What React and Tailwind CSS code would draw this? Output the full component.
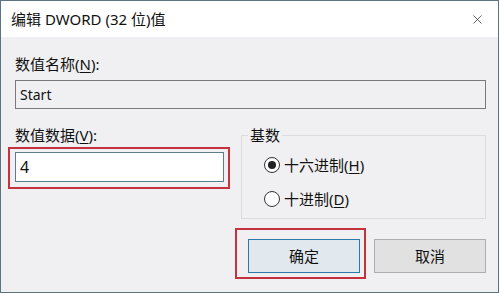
import { X } from "lucide-react";

const font = {
  fontFamily: '"Noto Sans", "Noto Sans CJK SC", sans-serif',
};

const Radio = ({ checked, children }) => (
  <label className="flex h-[20px] items-center gap-[4px]">
    <span className="flex h-[16px] w-[16px] items-center justify-center rounded-full border border-[#333] bg-white">
      {checked && <span className="h-[8px] w-[8px] rounded-full bg-[#222]" />}
    </span>
    <span className="text-[15px] leading-[20px]">{children}</span>
  </label>
);

const App = () => {
  return (
    <div
      className="flex h-[293px] w-[499px] flex-col border border-[#5a7482] bg-[#f0f0f2] text-[#111]"
      style={font}
    >
      <div className="flex h-[36px] flex-none items-center justify-between bg-white pl-[10px] pr-[13px]">
        <span className="text-[15px] leading-[20px]">编辑 DWORD (32 位)值</span>
        <X className="h-[15px] w-[15px] text-[#333]" strokeWidth={1.2} />
      </div>

      <div className="flex flex-col pl-[14px] pr-[12px] pt-[17px]">
        <div className="text-[15px] leading-[20px]">
          数值名称(<span className="underline underline-offset-2">N</span>):
        </div>
        <div className="mt-[6px] flex h-[29px] items-center border border-[#7a7a7a] bg-[#f0f0f2] px-[4px] text-[14px]">
          Start
        </div>

        <div className="mt-[16px] flex items-start">
          <div className="flex w-[216px] flex-none flex-col">
            <div className="text-[15px] leading-[20px]">
              数值数据(<span className="underline underline-offset-2">V</span>):
            </div>
            <div className="-ml-[7px] mt-[2px] w-[222px] border-2 border-[#c4323d] pb-[5px] pl-[5px] pr-[4px] pt-[3px]">
              <div className="flex h-[30px] items-center border border-[#5d7c8c] bg-white px-[4px] text-[16px]">
                4
              </div>
            </div>
          </div>

          <fieldset className="ml-[10px] h-[94px] flex-1 border border-[#dcdcdc]">
            <legend className="ml-[6px] px-[2px] text-[15px] leading-[20px]">基数</legend>
            <div className="flex flex-col gap-[14px] pl-[22px] pt-[10px]">
              <Radio checked>
                十六进制(<span className="underline underline-offset-2">H</span>)
              </Radio>
              <Radio>
                十进制(<span className="underline underline-offset-2">D</span>)
              </Radio>
            </div>
          </fieldset>
        </div>

        <div className="mt-[9px] flex items-start justify-end">
          <div className="border-2 border-[#c4323d] pb-[4px] pl-[11px] pr-[4px] pt-[9px]">
            <button className="flex h-[34px] w-[112px] items-center justify-center border border-[#2a7aa8] bg-[#e1e8ee] text-[15px]">
              确定
            </button>
          </div>
          <button className="ml-[8px] mt-[11px] flex h-[34px] w-[112px] items-center justify-center border border-[#adadad] bg-[#e1e1e1] text-[15px]">
            取消
          </button>
        </div>
      </div>
    </div>
  );
};

export default App;
